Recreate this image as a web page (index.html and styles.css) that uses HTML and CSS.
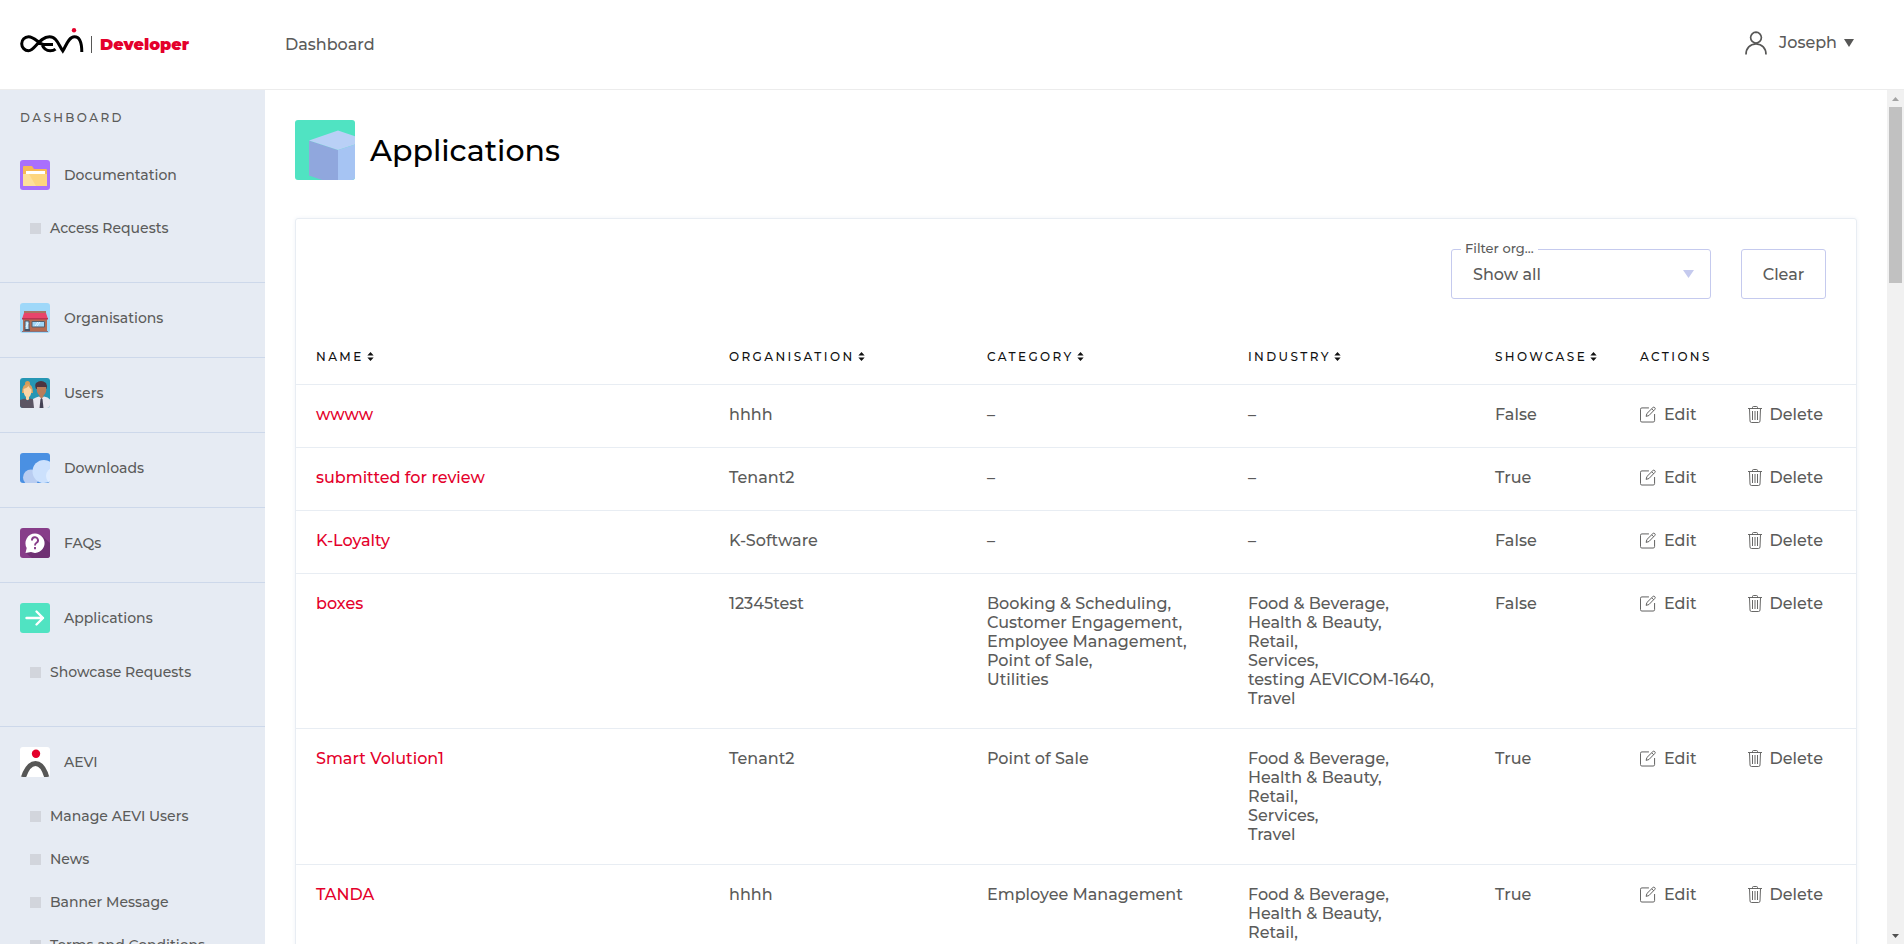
FILE: index.html
```html
<!DOCTYPE html>
<html lang="en">
<head>
<meta charset="utf-8">
<title>Applications | Developer</title>
<link rel="stylesheet" href="styles.css">
</head>
<body>
<svg class="sprite" aria-hidden="true">
  <symbol id="sort" viewBox="0 0 7 10"><path d="M0 4 3.500 0 7 4zM0 6h7L3.500 10z" fill="#111"/></symbol>
  <symbol id="edit" viewBox="0 0 17 17"><path d="M9.500 1.500H2a1.500 1.500 0 0 0-1.500 1.500v12A1.500 1.500 0 0 0 2 16.500h12a1.500 1.500 0 0 0 1.500-1.500V8M6.500 10.500l.8-3L13.600 1.200a1.400 1.400 0 0 1 2.100 2L9.500 9.600zM12.500 2.500l2 2" fill="none" stroke="#575756"/></symbol>
  <symbol id="trash" viewBox="0 0 14 17"><path d="M0 2.500h14M4.500 2.500v-1q0-1 1-1h3q1 0 1 1v1M1.500 3l.5 12q0 1.500 1.500 1.500h7q1.500 0 1.500-1.500l.5-12M4.500 5v9M7 5v9M9.500 5v9" fill="none" stroke="#575756" stroke-width=".9"/></symbol>
</svg>

<header class="topbar">
  <a class="brand" href="#">
    <svg class="brand-mark" viewBox="0 0 64 26" aria-label="aevi" role="img">
      <path d="M33 16.500H24C19 16.500 15 8.700 8.500 8.700a6.800 7 0 0 0 0 14c6.500 0 10.500-14 21-14 7 0 9 8 13.300 14.300C46 18 48.500 8.700 54.500 8.700c6 0 7.300 8.800 7.300 15.300M22 16.500c1.500 4 4 6.200 8.200 6.200 2.200 0 4-.5 5.300-1.600" fill="none" stroke="#000" stroke-width="3"/>
      <circle cx="54" cy="2.200" r="2.200" fill="#e4002b"/>
    </svg>
    <span class="brand-rule"></span>
    <span class="brand-name">Developer</span>
  </a>
  <nav class="topnav"><a href="#">Dashboard</a></nav>
  <button class="account" type="button">
    <svg width="22" height="24" viewBox="0 0 22 24" aria-hidden="true"><path d="M11 1.200a5.200 5.200 0 0 1 0 10.800 5.200 5.200 0 0 1 0-10.800zM1 23.500C1 17 5 13 11 13s10 4 10 10.500" fill="none" stroke="#575756" stroke-width="1.700"/></svg>
    <span>Joseph</span>
    <svg class="account-caret" viewBox="0 0 10 8" aria-hidden="true"><path d="M0 0h10L5 8z" fill="#575756"/></svg>
  </button>
</header>

<div class="layout">
  <aside class="sidebar">
    <h2 class="sidebar-title">Dashboard</h2>
    <section class="group">
      <a class="item" href="#">
        <svg class="tile" viewBox="0 0 30 30" aria-hidden="true"><rect width="30" height="30" fill="#a96ffd"/><path d="M3 7q0-1 1-1h8l2 3h12q1 0 1 1v5H3z" fill="#f7b955"/><path d="M6 11h19v4H6z" fill="#fff"/><path d="M3 14h24v12H4q-1 0-1-1z" fill="#fdd67f"/><path d="M3 14h6l7 12H4q-1 0-1-1z" fill="#fee09b"/></svg>
        Documentation</a>
      <ul class="sub"><li><a href="#">Access Requests</a></li></ul>
    </section>
    <section class="group">
      <a class="item" href="#">
        <svg class="tile" viewBox="0 0 30 30" aria-hidden="true"><rect width="30" height="30" fill="#9fd8f9"/><path d="M3 14h24v14H3z" fill="#b56b50"/><path d="M4 8h22v2H4z" fill="#a67765"/><path d="M4 10h22l2 6H2z" fill="#e8456b"/><path d="M2 15h26v1.500H2z" fill="#b93353"/><path d="M5 18h4v10H5z" fill="#bde5fb" stroke="#485568"/><path d="M5 26h5v2.500H5z" fill="#485568"/><path d="M12 18.500h12.500v5.500H12z" fill="#9fd6f5" stroke="#55606e"/><path d="m15 23 3-4m-1 4 3-4M6 24l2-4" stroke="#e9f7ff"/><path d="M2 28h26v1H2z" fill="#8d6f76"/></svg>
        Organisations</a>
    </section>
    <section class="group">
      <a class="item" href="#">
        <svg class="tile" viewBox="0 0 30 30" aria-hidden="true"><rect width="30" height="30" fill="#2596b4"/><circle cx="7.500" cy="5.500" r="2.500" fill="#d79a55"/><path d="M2 15q0-9 5.500-9t5.500 9z" fill="#dca260"/><path d="M3.500 11q4-1 5-3 1 2 3 3.500 0 6-2.500 7.500v3h-3v-3q-2.500-2-2.500-8z" fill="#fbd5a5"/><path d="M0 22q2-1 5-1.500l2.500 2 2.500-2q3 .5 5 1.500v8H0z" fill="#5c5563"/><path d="M16 5q5-4 10 0 1.500 2 .5 6H16q-1.500-4 0-6z" fill="#4d3440"/><path d="M17 9h9q1 6-2.500 8.500v4h-4v-4Q16 15 17 9z" fill="#b97d5b"/><path d="M13 21q3-2 6-2.500l2.500 2 2.500-2q4 .5 6 3V30H14z" fill="#e9e7ef"/><path d="m20.500 21 1-1 1 1 1 9h-4z" fill="#464254"/></svg>
        Users</a>
    </section>
    <section class="group">
      <a class="item" href="#">
        <svg class="tile" viewBox="0 0 30 30" aria-hidden="true"><rect width="30" height="30" fill="#4a90e2"/><circle cx="11" cy="24.500" r="8" fill="#b9cdf1"/><circle cx="24" cy="18.500" r="11.500" fill="#cce1fd"/><circle cx="34" cy="23" r="8" fill="#e0edff"/></svg>
        Downloads</a>
    </section>
    <section class="group">
      <a class="item" href="#">
        <svg class="tile" viewBox="0 0 30 30" aria-hidden="true"><rect width="30" height="30" fill="#873d89"/><path d="m22 8 8 7v15H12l-6-5z" fill="#6f3173"/><path d="M15 5.500a9.700 9.700 0 1 1-4 18.600L5.500 25l1.200-5A9.700 9.700 0 0 1 15 5.500z" fill="#fff"/><path d="M12 12.500a3 3 0 1 1 4.500 2.300Q15 15.800 15 17.500M15 19v2.200" fill="none" stroke="#873d89" stroke-width="1.900"/></svg>
        FAQs</a>
    </section>
    <section class="group">
      <a class="item" href="#">
        <svg class="tile" viewBox="0 0 30 30" aria-hidden="true"><rect width="30" height="30" fill="#50e3c2"/><path d="M6.500 15H23M16.500 8.500 23 15l-6.500 6.500" fill="none" stroke="#fff" stroke-width="2.400" stroke-linecap="round" stroke-linejoin="round"/></svg>
        Applications</a>
      <ul class="sub"><li><a href="#">Showcase Requests</a></li></ul>
    </section>
    <section class="group">
      <a class="item" href="#">
        <svg class="tile" viewBox="0 0 30 30" aria-hidden="true"><rect width="30" height="30" fill="#fff"/><circle cx="16" cy="6.700" r="4.200" fill="#e4002b"/><path d="M3.200 31Q8 16.500 15.500 16.500T27 31" fill="none" stroke="#575756" stroke-width="5"/></svg>
        AEVI</a>
      <ul class="sub">
        <li><a href="#">Manage AEVI Users</a></li>
        <li><a href="#">News</a></li>
        <li><a href="#">Banner Message</a></li>
        <li><a href="#">Terms and Conditions</a></li>
      </ul>
    </section>
  </aside>

  <main class="content">
    <div class="page-head">
      <svg class="page-icon" viewBox="0 0 60 60" aria-hidden="true"><rect width="60" height="60" fill="#50e3c2"/><path d="M14 20.500 43 30v30H27l-13-4.500z" fill="#90a7dd"/><path d="M43 30l29-9.500V60H43z" fill="#a6c4f3"/><path d="M14 20.500 43 10.500l29 10L43 30z" fill="#b9d0f6"/></svg>
      <h1>Applications</h1>
    </div>
    <section class="card">
      <form class="filters">
        <div class="field">
          <label for="org">Filter org...</label>
          <select id="org"><option>Show all</option></select>
          <svg class="caret" viewBox="0 0 11 8" aria-hidden="true"><path d="M0 0h11L5.500 8z" fill="#c5caee"/></svg>
        </div>
        <button class="clear" type="reset">Clear</button>
      </form>
      <table class="apps">
        <colgroup><col class="c-name"><col class="c-org"><col class="c-cat"><col class="c-ind"><col class="c-show"><col class="c-act"></colgroup>
        <thead>
          <tr>
            <th><button type="button">Name<svg><use href="#sort"/></svg></button></th>
            <th><button type="button">Organisation<svg><use href="#sort"/></svg></button></th>
            <th><button type="button">Category<svg><use href="#sort"/></svg></button></th>
            <th><button type="button">Industry<svg><use href="#sort"/></svg></button></th>
            <th><button type="button">Showcase<svg><use href="#sort"/></svg></button></th>
            <th>Actions</th>
          </tr>
        </thead>
        <tbody>
          <tr><td><a href="#">wwww</a></td><td>hhhh</td><td>–</td><td>–</td><td>False</td>
            <td><div class="actions"><button type="button"><svg class="i-edit"><use href="#edit"/></svg>Edit</button><button type="button"><svg class="i-trash"><use href="#trash"/></svg>Delete</button></div></td></tr>
          <tr><td><a href="#">submitted for review</a></td><td>Tenant2</td><td>–</td><td>–</td><td>True</td>
            <td><div class="actions"><button type="button"><svg class="i-edit"><use href="#edit"/></svg>Edit</button><button type="button"><svg class="i-trash"><use href="#trash"/></svg>Delete</button></div></td></tr>
          <tr><td><a href="#">K-Loyalty</a></td><td>K-Software</td><td>–</td><td>–</td><td>False</td>
            <td><div class="actions"><button type="button"><svg class="i-edit"><use href="#edit"/></svg>Edit</button><button type="button"><svg class="i-trash"><use href="#trash"/></svg>Delete</button></div></td></tr>
          <tr><td><a href="#">boxes</a></td><td>12345test</td><td>Booking &amp; Scheduling,<br>Customer Engagement,<br>Employee Management,<br>Point of Sale,<br>Utilities</td><td>Food &amp; Beverage,<br>Health &amp; Beauty,<br>Retail,<br>Services,<br>testing AEVICOM-1640,<br>Travel</td><td>False</td>
            <td><div class="actions"><button type="button"><svg class="i-edit"><use href="#edit"/></svg>Edit</button><button type="button"><svg class="i-trash"><use href="#trash"/></svg>Delete</button></div></td></tr>
          <tr><td><a href="#">Smart Volution1</a></td><td>Tenant2</td><td>Point of Sale</td><td>Food &amp; Beverage,<br>Health &amp; Beauty,<br>Retail,<br>Services,<br>Travel</td><td>True</td>
            <td><div class="actions"><button type="button"><svg class="i-edit"><use href="#edit"/></svg>Edit</button><button type="button"><svg class="i-trash"><use href="#trash"/></svg>Delete</button></div></td></tr>
          <tr><td><a href="#">TANDA</a></td><td>hhhh</td><td>Employee Management</td><td>Food &amp; Beverage,<br>Health &amp; Beauty,<br>Retail,<br>Services,<br>Travel</td><td>True</td>
            <td><div class="actions"><button type="button"><svg class="i-edit"><use href="#edit"/></svg>Edit</button><button type="button"><svg class="i-trash"><use href="#trash"/></svg>Delete</button></div></td></tr>
        </tbody>
      </table>
    </section>
  </main>

  <div class="scrollbar" aria-hidden="true">
    <svg class="scroll-arrow" viewBox="0 0 17 17"><path d="M5 11h7L8.500 7z" fill="#a3a3a3"/></svg>
    <div class="scroll-track"><div class="scroll-thumb"></div></div>
    <svg class="scroll-arrow" viewBox="0 0 17 17"><path d="M5 7h7l-3.500 4z" fill="#505050"/></svg>
  </div>
</div>
</body>
</html>
```

FILE: styles.css
```css
* { box-sizing: border-box; }

body {
  margin: 0;
  height: 100vh;
  display: flex;
  flex-direction: column;
  overflow: hidden;
  font: 490 16px/19px Montserrat, Inter, sans-serif;
  color: #5b5b5a;
  background: #fff;
}

a { color: inherit; text-decoration: none; }

button {
  padding: 0;
  border: 0;
  background: none;
  font: inherit;
  letter-spacing: inherit;
  text-transform: inherit;
  color: inherit;
  cursor: pointer;
}

svg { display: block; flex: none; }

.sprite { position: absolute; width: 0; height: 0; }

/* Top bar */
.topbar {
  flex: none;
  display: flex;
  align-items: center;
  height: 90px;
  padding: 0 50px 0 20px;
  border-bottom: 1px solid #ececec;
}

.brand { display: flex; align-items: center; width: 265px; }
.brand-mark { width: 64px; height: 26px; margin-bottom: 8px; }
.brand-rule { width: 1px; height: 17px; margin: 0 8px 0 7px; background: #575756; }
.brand-name { font-size: 16px; font-weight: 900; color: #e4002b; }

.topnav { flex: 1; }

.account { display: flex; align-items: center; gap: 12px; padding-bottom: 4px; }
.account-caret { width: 10px; height: 8px; margin-left: -5px; }

/* Page frame */
.layout { flex: 1; display: flex; min-height: 0; }

.sidebar {
  flex: none;
  width: 265px;
  overflow: hidden;
  background: #e6ebf3;
  font-size: 14px;
}

.sidebar-title {
  margin: 18px 20px 4px;
  font-size: 12px;
  line-height: 20px;
  font-weight: 490;
  letter-spacing: 0.2em;
  text-transform: uppercase;
}

.group { padding: 20px 20px 24px; border-bottom: 1px solid #cdd8ea; }
.group:has(.sub) { padding-bottom: 32px; }
.sidebar-title + .group { padding-top: 28px; }

.item { display: flex; align-items: center; gap: 14px; }
.tile { width: 30px; height: 30px; border-radius: 3px; }

.sub { margin: 17px 0 0; padding: 0 0 0 10px; list-style: none; }
.group + .group .sub { margin-top: 18px; }
.sub a { display: flex; align-items: center; gap: 9px; height: 43px; }
.sub a::before { content: ""; width: 11px; height: 11px; background: #d2d5dc; }

/* Main column */
.content { flex: 1; min-width: 0; overflow: hidden; padding: 30px; }

.scrollbar { flex: none; display: flex; flex-direction: column; width: 17px; background: #f1f1f1; }
.scroll-arrow { width: 17px; height: 17px; }
.scroll-track { flex: 1; padding: 0 2px; }
.scroll-thumb { height: 176px; background: #c1c1c1; }

.page-head { display: flex; align-items: center; gap: 15px; margin-bottom: 38px; }
.page-icon { width: 60px; height: 60px; border-radius: 3px; }
.page-head h1 { margin: 0; padding-top: 2px; font-size: 30px; line-height: 40px; font-weight: 490; color: #000; }

.card { border: 1px solid #e8edf3; border-radius: 3px; box-shadow: 0 0 4px #f0f3f8; }

.filters { display: flex; justify-content: flex-end; gap: 30px; padding: 30px; }

.field { position: relative; width: 260px; }
.field label {
  position: absolute;
  top: -10px;
  left: 10px;
  padding: 0 4px;
  font-size: 13px;
  background: #fff;
}
.field select {
  width: 100%;
  height: 50px;
  padding: 0 21px;
  border: 1px solid #c5caee;
  border-radius: 3px;
  appearance: none;
  background: #fff;
  font: inherit;
  color: inherit;
}
.caret { position: absolute; right: 17px; top: 21px; width: 11px; height: 8px; }

.clear { width: 85px; height: 50px; border: 1px solid #c5caee; border-radius: 3px; }

.apps { width: 100%; table-layout: fixed; border-collapse: collapse; }
.c-name { width: 413px; }
.c-org { width: 258px; }
.c-cat { width: 261px; }
.c-ind { width: 247px; }
.c-show { width: 145px; }

.apps th {
  height: 55px;
  padding: 0 20px;
  text-align: left;
  font-size: 12px;
  font-weight: 490;
  letter-spacing: 0.2em;
  text-transform: uppercase;
  color: #111;
}
.apps th button { display: flex; align-items: center; gap: 3px; }
.apps th svg { width: 7px; height: 9px; }

.apps td { height: 63px; padding: 20px; vertical-align: top; border-top: 1px solid #e8edf3; }
.apps td a { color: #e4002b; }

.actions { display: flex; justify-content: space-between; margin-right: 13px; white-space: nowrap; }
.actions button { display: flex; align-items: center; gap: 8px; }
.i-edit { width: 16px; height: 17px; }
.i-trash { width: 14px; height: 17px; }
```
